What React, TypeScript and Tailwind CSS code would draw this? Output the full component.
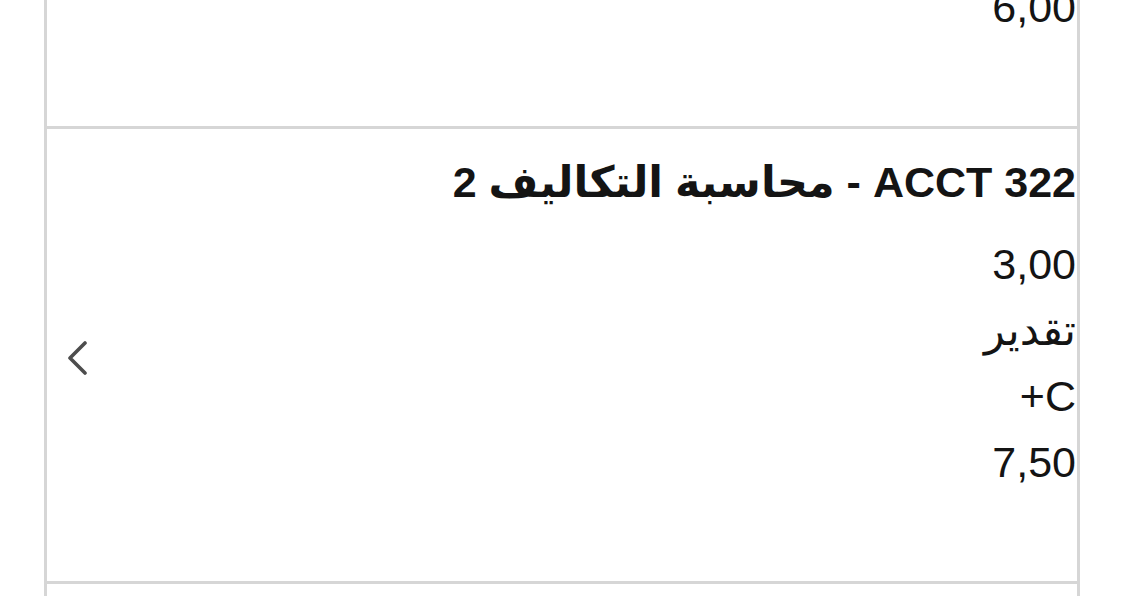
import React from "react";

interface Course {
  code: string;
  name: string;
  hours: string;
  label: string;
  grade: string;
  points: string;
}

const courses: Course[] = [
  {
    code: "ACCT 321",
    name: "محاسبة التكاليف 1",
    hours: "3,00",
    label: "تقدير",
    grade: "B",
    points: "6,00",
  },
  {
    code: "ACCT 322",
    name: "محاسبة التكاليف 2",
    hours: "3,00",
    label: "تقدير",
    grade: "C+",
    points: "7,50",
  },
];

const Chevron = () => (
  <svg width="22" height="34" viewBox="0 0 22 34" fill="none" className="shrink-0">
    <polyline
      points="19,2 4,17 19,32"
      stroke="#4d4d4d"
      strokeWidth="3.6"
      strokeLinecap="round"
      strokeLinejoin="round"
    />
  </svg>
);

const CourseRow = ({ course }: { course: Course }) => (
  <div dir="rtl" className="flex items-center border-b-[3px] border-[#d6d6d6]">
    <div className="flex-1 pt-[20px] pb-[86px] pr-px text-right text-[43px] leading-[66px] text-[#141414]">
      <div className="font-bold">
        {course.code} - {course.name}
      </div>
      <div className="mt-4">{course.hours}</div>
      <div>{course.label}</div>
      <div>{course.grade}</div>
      <div>{course.points}</div>
    </div>
    <div className="pl-[19px] pt-[6px]">
      <Chevron />
    </div>
  </div>
);

export default function App() {
  return (
    <div
      className="h-[596px] w-[1124px] overflow-hidden bg-white"
      style={{ fontFamily: '"Liberation Sans", "DejaVu Sans", sans-serif' }}
    >
      <div className="ml-[44px] -mt-[326px] w-[1036px] border-x-[3px] border-[#d6d6d6]">
        {courses.map((c) => (
          <CourseRow key={c.code} course={c} />
        ))}
        <div className="h-[80px]" />
      </div>
    </div>
  );
}
